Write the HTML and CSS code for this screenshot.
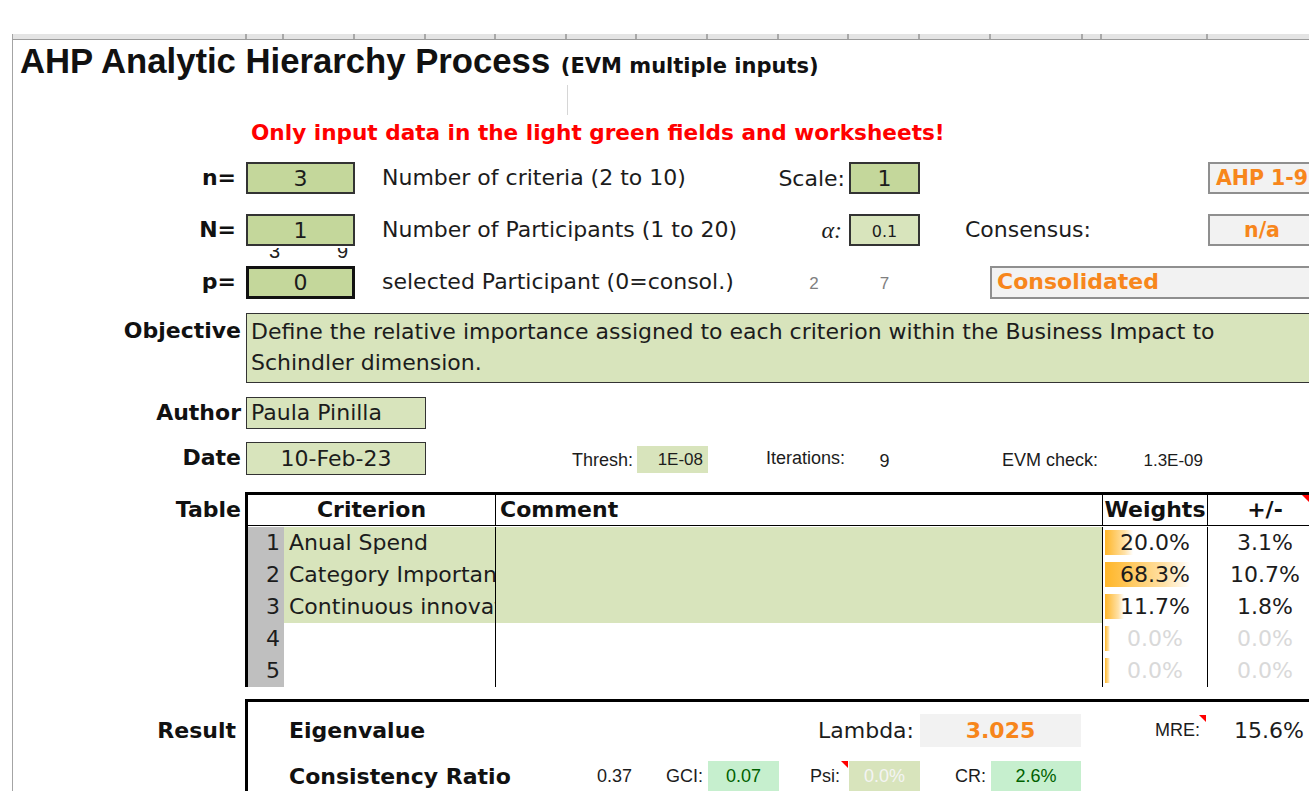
FILE: index.html
```html
<!DOCTYPE html>
<html lang="en">
<head>
<meta charset="utf-8">
<title>AHP Analytic Hierarchy Process</title>
<link rel="stylesheet" href="styles.css">
</head>
<body>
<div class="colbar">
  <span></span><span></span><span></span><span></span><span></span><span></span><span></span><span></span>
  <span></span><span></span><span></span><span></span><span></span><span></span><span></span><span class="last"></span>
</div>

<main class="sheet">
  <div class="row title-row">
    <h1 class="title">AHP Analytic Hierarchy Process <small>(EVM multiple inputs)</small></h1>
  </div>
  <div class="row gap-row"><span class="rule col-g"></span></div>
  <div class="row note-row">
    <p class="note span-b-end">Only input data in the light green fields and worksheets!</p>
  </div>

  <div class="row param row-n">
    <span class="lbl lbl-param col-a">n=</span>
    <span class="box inp span-bc">3</span>
    <span class="desc span-dh">Number of criteria (2 to 10)</span>
    <span class="key col-ij">Scale:</span>
    <span class="box inp col-k">1</span>
    <span class="obox center col-p">AHP 1-9</span>
  </div>

  <div class="row param row-N">
    <span class="lbl lbl-param col-a">N=</span>
    <span class="box inp span-bc">1</span>
    <span class="desc span-dh">Number of Participants (1 to 20)</span>
    <span class="key alpha col-ij">α:</span>
    <span class="box inp-light small-val col-k">0.1</span>
    <span class="desc consensus span-lm">Consensus:</span>
    <span class="obox center col-p">n/a</span>
  </div>

  <div class="row ghost-row">
    <span class="ghost col-b"><i>3</i></span>
    <span class="ghost col-c"><i>9</i></span>
  </div>

  <div class="row param row-p">
    <span class="lbl lbl-param col-a">p=</span>
    <span class="box inp thick span-bc">0</span>
    <span class="desc span-dh">selected Participant (0=consol.)</span>
    <span class="hint col-j">2</span>
    <span class="hint col-k">7</span>
    <span class="obox left span-mp">Consolidated</span>
  </div>

  <div class="row objective-row">
    <span class="lbl col-a">Objective</span>
    <p class="field objective span-b-end">Define the relative importance assigned to each criterion within the Business Impact to Schindler dimension.</p>
  </div>

  <div class="row line-row author-row">
    <span class="lbl col-a">Author</span>
    <span class="field left span-bd">Paula Pinilla</span>
  </div>

  <div class="row line-row date-row">
    <span class="lbl col-a">Date</span>
    <span class="field center span-bd">10-Feb-23</span>
    <span class="meta col-g">Thresh:</span>
    <span class="thresh col-h">1E-08</span>
    <span class="meta raised col-ij">Iterations:</span>
    <span class="meta-val col-k">9</span>
    <span class="meta span-mn">EVM check:</span>
    <span class="meta-num col-o">1.3E-09</span>
  </div>

  <div class="row table-row">
    <span class="lbl lbl-table col-a">Table</span>
    <div class="crit-table span-b-end">
      <div class="th th-crit">Criterion</div>
      <div class="th th-comment">Comment</div>
      <div class="th th-w">Weights</div>
      <div class="th th-pm">+/-<span class="marker"></span></div>

      <div class="idx">1</div><div class="crit filled">Anual Spend</div><div class="comment filled"></div>
      <div class="w" style="--bar:28px">20.0%</div><div class="pm">3.1%</div>

      <div class="idx">2</div><div class="crit filled">Category Importance</div><div class="comment filled"></div>
      <div class="w" style="--bar:85px">68.3%</div><div class="pm">10.7%</div>

      <div class="idx">3</div><div class="crit filled">Continuous innovation</div><div class="comment filled"></div>
      <div class="w" style="--bar:19px">11.7%</div><div class="pm">1.8%</div>

      <div class="idx">4</div><div class="crit"></div><div class="comment"></div>
      <div class="w zero" style="--bar:5px">0.0%</div><div class="pm zero">0.0%</div>

      <div class="idx">5</div><div class="crit"></div><div class="comment"></div>
      <div class="w zero" style="--bar:5px">0.0%</div><div class="pm zero">0.0%</div>
    </div>
  </div>

  <div class="row result-row">
    <span class="lbl lbl-result col-a">Result</span>
    <div class="result span-b-end">
      <span class="rhead r-c">Eigenvalue</span>
      <span class="rkey r-jk">Lambda:</span>
      <span class="rbox gray r-lm">3.025</span>
      <span class="rsmall r-o">MRE:<span class="marker"></span></span>
      <span class="rval r-p">15.6%</span>

      <span class="rhead r-c">Consistency Ratio</span>
      <span class="rsmall r-g">0.37</span>
      <span class="rsmall r-h">GCI:</span>
      <span class="rbox good r-i">0.07</span>
      <span class="rsmall psi r-j">Psi:<span class="marker"></span></span>
      <span class="rbox muted r-k">0.0%</span>
      <span class="rsmall r-l">CR:</span>
      <span class="rbox good r-m">2.6%</span>
    </div>
  </div>
</main>
</body>
</html>
```

FILE: styles.css
```css
:root {
  --cols: 234px 37px 71px 71px 70px 71px 70px 71px 71px 70px 71px 71px 92px 19px 106px 102px;
  --inp: #c4d79b;
  --inp-light: #d8e4bc;
  --orange: #f7861c;
  --ink: #1c1c1c;
  --ok-bg: #c6efce;
  --ok-ink: #006100;
}

html, body {
  margin: 0;
  background: #fff;
}

body {
  width: 1309px;
  height: 791px;
  overflow: hidden;
  padding-top: 34px;
  box-sizing: border-box;
  font-family: "DejaVu Sans", "Liberation Sans", sans-serif;
  color: var(--ink);
}

/* column header strip along the top of the sheet */
.colbar {
  margin-left: 12px;
  height: 5px;
  background: #e4e4e4;
  border-bottom: 1px solid #9c9c9c;
  border-left: 1px solid #a4a4a4;
  display: grid;
  grid-template-columns: var(--cols);
}
.colbar span { border-right: 2px solid #a9a9a9; }
.colbar span.last { border-right: 0; }

.sheet {
  margin-left: 12px;
  border-left: 1px solid #a4a4a4;
  height: 760px;
}

.row {
  display: grid;
  grid-template-columns: var(--cols);
  grid-template-rows: 100%;
}

/* column placement */
.col-a { grid-column: 1; grid-row: 1; }
.col-b { grid-column: 2; grid-row: 1; }
.col-c { grid-column: 3; grid-row: 1; }
.col-g { grid-column: 7; grid-row: 1; }
.col-h { grid-column: 8; grid-row: 1; }
.col-j { grid-column: 10; grid-row: 1; }
.col-k { grid-column: 11; grid-row: 1; }
.col-o { grid-column: 15; grid-row: 1; }
.col-p { grid-column: 16; grid-row: 1; }
.col-ij { grid-column: 9 / 11; grid-row: 1; }
.span-bc { grid-column: 2 / 4; grid-row: 1; }
.span-bd { grid-column: 2 / 5; grid-row: 1; }
.span-dh { grid-column: 4 / 9; grid-row: 1; }
.span-lm { grid-column: 12 / 14; grid-row: 1; }
.span-mn { grid-column: 13 / 15; grid-row: 1; }
.span-mp { grid-column: 13 / 17; grid-row: 1; }
.span-b-end { grid-column: 2 / -1; grid-row: 1; }

/* title */
.title-row { height: 42px; }
.title {
  grid-column: 1 / -1;
  margin: 0;
  padding-left: 7px;
  font: bold 34.7px/42px "Liberation Sans", Arial, sans-serif;
  white-space: nowrap;
  color: #111;
}
.title small {
  font: bold 21px "DejaVu Sans", sans-serif;
  margin-left: 1px;
}

.gap-row { height: 33px; }
.rule {
  margin-top: 3px;
  border-left: 1px solid #d6d6d6;
}

.note-row { height: 35px; }
.note {
  margin: 0;
  padding-left: 4px;
  color: #ff0000;
  font: bold 21.6px/35px "DejaVu Sans", sans-serif;
  white-space: nowrap;
}

/* parameter rows */
.param { height: 32px; }
.row-n { margin-top: 12px; }
.row-N { margin-top: 20px; }
.row-p { margin-top: 6px; height: 33px; }

.lbl {
  text-align: right;
  padding-right: 6px;
  font: bold 22px/32px "DejaVu Sans", sans-serif;
  color: #111;
  white-space: nowrap;
}
.lbl-param { padding-right: 11px; }

.box {
  box-sizing: border-box;
  border: 2px solid #333;
  display: flex;
  align-items: center;
  justify-content: center;
  font-size: 22px;
}
.span-bc.box { margin-left: -1px; }
.inp { background: var(--inp); }
.inp-light { background: var(--inp-light); }
.thick { border: 3px solid #111; }
.small-val { font-size: 16px; padding-top: 3px; }

.desc {
  padding-left: 27px;
  font-size: 22px;
  line-height: 32px;
  white-space: nowrap;
}
.consensus { padding-left: 45px; }

.key {
  display: flex;
  justify-content: flex-end;
  align-items: center;
  padding-right: 4px;
  font-size: 22px;
  white-space: nowrap;
}
.alpha {
  padding-right: 7px;
  font: italic 24px "Liberation Serif", "DejaVu Serif", serif;
}

.obox {
  box-sizing: border-box;
  background: #f2f2f2;
  border: 2px solid #8f8f8f;
  border-right: 0;
  margin-right: -12px;
  color: var(--orange);
  font: bold 21px/28px "DejaVu Sans", sans-serif;
  white-space: nowrap;
}
.obox.center { text-align: center; margin-right: -4px; font-size: 20.5px; }
.obox.left { margin-left: -1px; padding-left: 5px; font-size: 22px; }

.hint {
  text-align: center;
  color: #7f7f7f;
  font: 17px/36px "Liberation Sans", sans-serif;
}

.ghost-row {
  height: 12px;
  margin-top: 2px;
  overflow: hidden;
}
.ghost {
  display: flex;
  justify-content: flex-end;
  padding-right: 4px;
  font: 20px/20px "Liberation Sans", sans-serif;
  color: #222;
}
.ghost.col-c { padding-right: 7px; }
.ghost i { font-style: normal; margin-top: -7px; }

/* objective / author / date */
.field {
  box-sizing: border-box;
  margin: 0 0 0 -1px;
  background: var(--inp-light);
  border: 1px solid #333;
  font-size: 22px;
  white-space: nowrap;
}
.objective-row { margin-top: 14px; height: 70px; }
.objective {
  margin-right: -20px;
  padding: 2px 100px 2px 4px;
  line-height: 31px;
  white-space: normal;
}
.objective-row .lbl { line-height: 36px; }

.line-row { height: 32px; }
.author-row { margin-top: 14px; }
.date-row { margin-top: 13px; height: 33px; }
.field.left { padding-left: 4px; line-height: 30px; }
.field.center { text-align: center; line-height: 31px; }

.meta {
  display: flex;
  justify-content: flex-end;
  align-items: center;
  padding-right: 4px;
  padding-top: 4px;
  font: 18px "Liberation Sans", sans-serif;
  white-space: nowrap;
}
.meta.raised { padding-top: 0; }
.thresh {
  margin: 4px 0 2px;
  background: var(--inp-light);
  text-align: right;
  padding-right: 5px;
  font: 17px/27px "Liberation Sans Narrow", "Liberation Sans", sans-serif;
}
.meta-val {
  text-align: center;
  padding-top: 4px;
  font: 18px/30px "Liberation Sans", sans-serif;
}
.meta-num {
  text-align: right;
  padding-right: 5px;
  padding-top: 4px;
  font: 17px/30px "Liberation Sans Narrow", "Liberation Sans", sans-serif;
}

/* criteria table */
.table-row { margin-top: 17px; }
.lbl-table { padding-top: 3px; line-height: 30px; }

.crit-table {
  margin-left: -2px;
  margin-right: -20px;
  border-top: 3px solid #000;
  border-left: 3px solid #000;
  display: grid;
  grid-template-columns: 36px 212px 607px 105px 1fr;
  grid-auto-rows: 32px;
  font-size: 22px;
}
.th {
  height: 30px;
  border-bottom: 1px solid #000;
  font: bold 22px/30px "DejaVu Sans", sans-serif;
  color: #111;
  white-space: nowrap;
  position: relative;
}
.th-crit { grid-column: 1 / 3; text-align: center; border-right: 1px solid #000; }
.th-comment { padding-left: 4px; border-right: 1px solid #000; }
.th-w { text-align: center; border-right: 1px solid #000; }
.th-pm { text-align: center; padding-right: 8px; }
.th-pm .marker { right: 21px; }

.idx {
  background: #bfbfbf;
  text-align: right;
  padding-right: 4px;
  line-height: 32px;
}
.crit {
  padding-left: 5px;
  line-height: 32px;
  white-space: nowrap;
  overflow: hidden;
  border-right: 1px solid #000;
}
.comment { border-right: 1px solid #000; }
.filled { background: var(--inp-light); }
.w {
  border-right: 1px solid #000;
  text-align: center;
  line-height: 32px;
  background: linear-gradient(to right, #ffb628, #ffe1a6 70%, #fff) no-repeat 2px 3px / var(--bar) 25px;
}
.pm { text-align: center; line-height: 32px; padding-right: 8px; }
.zero { color: #d9d9d9; }

/* comment indicator */
.marker {
  position: absolute;
  top: 0;
  right: 0;
  width: 0;
  height: 0;
  border-top: 7px solid #ff0000;
  border-left: 7px solid transparent;
}

/* results block */
.result-row { margin-top: 12px; }
.lbl-result { padding-top: 15px; padding-right: 11px; line-height: 33px; }

.result {
  margin-left: -2px;
  margin-right: -20px;
  height: 100px;
  border-top: 3px solid #000;
  border-left: 3px solid #000;
  padding-top: 12px;
  display: grid;
  grid-template-columns: 36px 71px 71px 70px 71px 70px 71px 71px 70px 71px 71px 92px 19px 106px 1fr;
  grid-template-rows: 33px 31px;
  row-gap: 14px;
  align-items: center;
}
.result > * { grid-row: 1; }
.result > :nth-child(n+6) { grid-row: 2; }
.r-c { grid-column: 2 / 6; }
.r-jk { grid-column: 9 / 11; }
.r-lm { grid-column: 11 / 13; margin-right: 2px; }
.r-o { grid-column: 14; }
.r-p { grid-column: 15; }
.r-g { grid-column: 6; }
.r-h { grid-column: 7; }
.r-i { grid-column: 8; }
.r-j { grid-column: 9; }
.r-k { grid-column: 10; }
.r-l { grid-column: 11; }
.r-m { grid-column: 12; margin-right: 2px; }

.rhead {
  padding-left: 5px;
  font: bold 22px "DejaVu Sans", sans-serif;
  color: #111;
  white-space: nowrap;
}
.rkey {
  display: flex;
  justify-content: flex-end;
  padding-right: 6px;
  font-size: 22px;
  white-space: nowrap;
}
.rbox {
  align-self: stretch;
  display: flex;
  align-items: center;
  justify-content: center;
}
.gray {
  background: #f2f2f2;
  color: var(--orange);
  font: bold 22px "DejaVu Sans", sans-serif;
}
.good {
  background: var(--ok-bg);
  color: var(--ok-ink);
  font: 18px "Liberation Sans Narrow", "Liberation Sans", sans-serif;
}
.muted {
  background: var(--inp-light);
  color: #f4f4f4;
  font: 18px "Liberation Sans Narrow", "Liberation Sans", sans-serif;
}
.rsmall {
  position: relative;
  align-self: stretch;
  display: flex;
  align-items: center;
  justify-content: flex-end;
  padding-right: 5px;
  font: 18px "Liberation Sans Narrow", "Liberation Sans", sans-serif;
  white-space: nowrap;
}
.r-o.rsmall { padding-right: 8px; }
.r-o .marker { right: 2px; top: 1px; }
.psi { padding-right: 9px; }
.psi .marker { right: 1px; }
.rval { text-align: center; font-size: 22px; }
```
